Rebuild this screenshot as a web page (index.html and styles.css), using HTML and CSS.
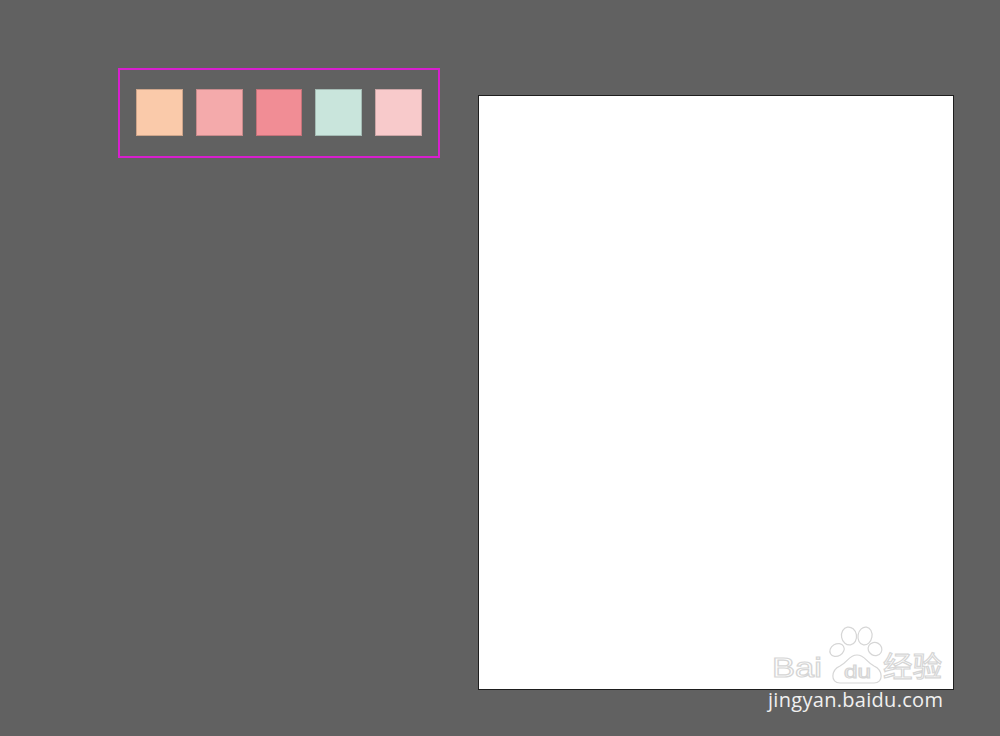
FILE: index.html
```html
<!DOCTYPE html>
<html lang="en">
<head>
    <meta charset="UTF-8">
    <meta name="viewport" content="width=device-width, initial-scale=1.0">
    <title>Swatches</title>
    <link rel="stylesheet" href="styles.css">
</head>
<body>
    <section class="stage">
        <div class="palette">
            <div class="swatch peach"></div>
            <div class="swatch rose"></div>
            <div class="swatch coral"></div>
            <div class="swatch mint"></div>
            <div class="swatch blush"></div>
        </div>

        <div class="artboard"></div>
    </section>

    <div class="watermark">
        <svg class="logo" width="190" height="64" viewBox="0 0 190 64">
            <text class="bai" x="12" y="55" textLength="50" lengthAdjust="spacingAndGlyphs">Bai</text>
            <ellipse cx="77" cy="28" rx="7.5" ry="6" transform="rotate(-30 77 28)" />
            <ellipse cx="89" cy="14" rx="7.5" ry="9" transform="rotate(-10 89 14)" />
            <ellipse cx="105" cy="14" rx="7" ry="9" transform="rotate(10 105 14)" />
            <ellipse cx="115" cy="27" rx="7" ry="6.5" transform="rotate(30 115 27)" />
            <path d="M80 61 C70 61 71 48 80 44 C88 40 89 33 97 33 C105 33 106 40 114 44 C123 48 124 61 114 61 Z" />
            <text class="du" x="84" y="56" textLength="27" lengthAdjust="spacingAndGlyphs">du</text>
            <text class="jy" x="123" y="55" textLength="59" lengthAdjust="spacingAndGlyphs">经验</text>
        </svg>
        <p class="url">jingyan.baidu.com</p>
    </div>
</body>
</html>
```

FILE: styles.css
```css
:root {
    --bg: #616161;
    --frame: #d81fcf;
    --mark: #d6d6d6;
}
* {
    margin: 0;
    padding: 0;
    box-sizing: border-box;
}
body {
    background-color: var(--bg);
    height: 736px;
    overflow: hidden;
    position: relative;
    font-family: "Open Sans", "Noto Sans", sans-serif;
}
.stage {
    display: flex;
    align-items: flex-start;
    padding: 68px 0 0 118px;
}
.palette {
    display: flex;
    gap: 13px;
    width: 322px;
    height: 90px;
    padding: 19px 16px;
    border: 2px solid var(--frame);
}
.swatch {
    width: 47.5px;
    height: 47px;
    border: 1px solid rgba(0, 0, 0, 0.18);
}
.peach { background-color: #facaaa; }
.rose  { background-color: #f4aaab; }
.coral { background-color: #f18d95; }
.mint  { background-color: #c9e5dc; }
.blush { background-color: #f8cacb; }

.artboard {
    width: 476px;
    height: 595px;
    margin: 27px 0 0 38px;
    background-color: white;
    border: 1px solid #1e1e1e;
}

/* watermark sits over the artboard corner */
.watermark {
    position: absolute;
    left: 760px;
    top: 622px;
}
.logo {
    display: block;
    fill: none;
    stroke: var(--mark);
    stroke-width: 1.2;
}
.logo text {
    font-family: "Liberation Sans", sans-serif;
}
.bai {
    font-size: 28px;
}
.du {
    font-size: 19px;
}
.jy {
    font-family: "Noto Sans CJK SC", sans-serif !important;
    font-size: 28px;
}
.url {
    color: #f0f0f0;
    font-size: 20px;
    line-height: 26px;
    margin: 1px 0 0 8px;
    letter-spacing: 0.3px;
}
```
